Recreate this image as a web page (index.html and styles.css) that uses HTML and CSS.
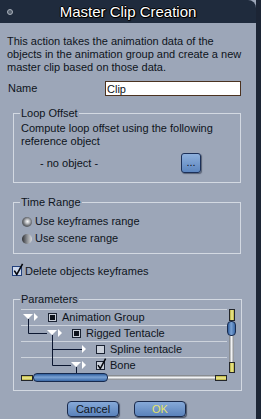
FILE: index.html
```html
<!DOCTYPE html>
<html lang="en">
<head>
<meta charset="UTF-8">
<meta name="viewport" content="width=device-width, initial-scale=1.0">
<title>Master Clip Creation</title>
<link rel="stylesheet" href="styles.css">
</head>
<body>
<div class="dialog">
    <div class="titlebar">
        <span class="close-dot"></span>
        <h1>Master Clip Creation</h1>
    </div>
    <div class="content">
        <p class="intro">This action takes the animation data of the<br>objects in the animation group and create a new<br>master clip based on those data.</p>

        <div class="name-row">
            <label for="clipName">Name</label>
            <input type="text" id="clipName" class="text-field" value="Clip">
        </div>

        <fieldset class="group group-loop">
            <legend>Loop Offset</legend>
            <p class="group-text">Compute loop offset using the following<br>reference object</p>
            <div class="object-row">
                <span class="object-name">- no object -</span>
                <button class="small-button">...</button>
            </div>
        </fieldset>

        <fieldset class="group group-time">
            <legend>Time Range</legend>
            <div class="radio-row"><span class="radio checked"></span>Use keyframes range</div>
            <div class="radio-row"><span class="radio"></span>Use scene range</div>
        </fieldset>

        <div class="check-row">
            <svg class="tick-box" width="12" height="14" viewBox="0 0 12 14">
                <rect x="0.5" y="3.5" width="9" height="9" fill="#cdd8ec" stroke="#22407c"/>
                <path d="M2.3 7.6 L4.8 11.4 L10.6 0.8" fill="none" stroke="#05070c" stroke-width="1.6"/>
            </svg>
            Delete objects keyframes
        </div>

        <fieldset class="group group-params">
            <legend>Parameters</legend>
            <div class="tree">
                <div class="tree-body">
                    <svg class="links" width="206" height="64">
                        <path d="M7.5 10 V24.5 H26 M31.5 26 V56.5 H50 M31.5 40.5 H61 M55.5 58 V64" fill="none" stroke="#0b1630" stroke-width="1"/>
                    </svg>
                    <div class="node depth-0">
                        <svg class="twist" width="16" height="9"><polygon points="0,1 10,1 5,6" fill="#fff"/><polygon points="11,0 15,4 11,8" fill="#fff"/></svg>
                        <span class="node-check mixed"></span>Animation Group
                    </div>
                    <div class="node depth-1">
                        <svg class="twist" width="16" height="9"><polygon points="0,1 10,1 5,6" fill="#fff"/><polygon points="11,0 15,4 11,8" fill="#fff"/></svg>
                        <span class="node-check mixed"></span>Rigged Tentacle
                    </div>
                    <div class="node depth-2">
                        <svg class="twist" width="16" height="9"><polygon points="11,0 15,4 11,8" fill="#fff"/></svg>
                        <span class="node-check"></span>Spline tentacle
                    </div>
                    <div class="node depth-2">
                        <svg class="twist" width="16" height="9"><polygon points="0,1 10,1 5,6" fill="#fff"/><polygon points="11,0 15,4 11,8" fill="#fff"/></svg>
                        <svg class="node-tick" width="11" height="13" viewBox="0 0 11 13">
                            <rect x="0.5" y="3.5" width="8" height="8" fill="#c9cfd9" stroke="#1a2232"/>
                            <path d="M2 7.2 L4.3 10.6 L9.6 0.6" fill="none" stroke="#05070c" stroke-width="1.5"/>
                        </svg>Bone
                    </div>
                </div>
                <div class="vscroll">
                    <span class="cap"></span>
                    <span class="thumb"></span>
                    <span class="track"></span>
                    <span class="cap cap-end"></span>
                </div>
                <div class="hscroll">
                    <span class="cap"></span>
                    <span class="thumb"></span>
                    <span class="track"></span>
                    <span class="cap"></span>
                </div>
            </div>
        </fieldset>

        <div class="button-row">
            <button class="button">Cancel</button>
            <button class="button button-ok">OK</button>
        </div>
    </div>
</div>
</body>
</html>
```

FILE: styles.css
```css
body {
    margin: 0;
    background-color: #1c2535;
    font-family: 'Liberation Sans', Arial, sans-serif;
    font-size: 11px;
    color: #0e1420;
}
.dialog {
    width: 256px;
    height: 419px;
    background-color: #9ca6b8;
    overflow: hidden;
}
.titlebar {
    height: 23px;
    background-color: #1f2b3d;
    border-top-right-radius: 8px;
    display: grid;
    grid-template-columns: 20px 1fr 20px;
    align-items: center;
}
.close-dot {
    width: 4px;
    height: 4px;
    margin-left: 7px;
    border: 1px solid #a9b1bc;
    border-radius: 50%;
    background-color: #55606e;
}
.titlebar h1 {
    margin: 0;
    font-size: 15px;
    font-weight: normal;
    color: #fff;
    text-align: center;
    line-height: 23px;
    text-shadow: 1px 0 0 #000, -1px 0 0 #000, 0 1px 0 #000, 0 -1px 0 #000, 1px 1px 1px #000;
}
.content {
    padding: 0 0 0 7px;
    line-height: 13px;
}
.intro {
    margin: 12px 0 0 0;
    white-space: nowrap;
}
.name-row {
    margin-top: 7px;
    display: grid;
    grid-template-columns: 98px 136px;
    align-items: center;
    height: 15px;
}
.name-row label {
    padding-left: 1px;
}
.text-field {
    box-sizing: border-box;
    width: 136px;
    height: 15px;
    margin: 0;
    padding: 0 1px;
    border: 1px solid #4b3220;
    background-color: #fff;
    font-family: inherit;
    font-size: 11px;
    color: #0e1420;
    outline: none;
}
.group {
    box-sizing: border-box;
    width: 228px;
    margin: 11px 0 0 6px;
    border: 1px solid #d3d9e2;
    padding: 2px 5px 9px 7px;
}
.group legend {
    padding: 0 1px;
    margin-left: -1px;
    line-height: 13px;
}
.group-text {
    margin: 0;
}
.object-row {
    margin-top: 5px;
    height: 20px;
    display: flex;
    align-items: center;
}
.object-name {
    margin-left: 19px;
}
.small-button {
    width: 20px;
    height: 20px;
    margin: 0 34px 0 auto;
    padding: 0 0 3px 0;
    border: 1px solid #1c3058;
    border-radius: 3px;
    background: linear-gradient(#8eb0dc, #5d86bf);
    box-shadow: 1px 1px 1px rgba(20, 30, 50, 0.5);
    font-family: inherit;
    font-size: 11px;
    color: #0e1420;
}
.group-time {
    margin-top: 13px;
    padding-top: 4px;
    padding-bottom: 6px;
}
.radio-row {
    height: 17px;
    display: flex;
    align-items: center;
}
.radio {
    width: 10px;
    height: 10px;
    margin: 0 3px 0 1px;
    border-radius: 50%;
    background: linear-gradient(to right, #2e3034, #8a8d92 50%, #d8dadd);
}
.radio.checked {
    background: radial-gradient(circle at 55% 45%, #fafafa 0, #c9cbcf 22%, #6a6d72 55%, #2a2c30 100%);
}
.check-row {
    margin-top: 11px;
    height: 13px;
    display: flex;
    align-items: center;
}
.tick-box {
    margin: -3px 1px 0 5px;
}
.group-params {
    margin-top: 15px;
    padding-top: 3px;
    padding-bottom: 8px;
}
.tree {
    display: grid;
    grid-template-columns: 206px 9px;
    grid-template-rows: 64px 9px;
}
.tree-body {
    position: relative;
}
.links {
    position: absolute;
    left: 0;
    top: 0;
    pointer-events: none;
}
.node {
    box-sizing: border-box;
    height: 16px;
    border-top: 1px solid #cdd3dc;
    display: flex;
    align-items: center;
    white-space: nowrap;
}
.depth-0 { padding-left: 2px; }
.depth-1 { padding-left: 26px; }
.depth-2 { padding-left: 50px; }
.twist {
    flex: none;
}
.node-check {
    flex: none;
    box-sizing: border-box;
    width: 9px;
    height: 9px;
    margin: 0 5px 0 9px;
    border: 1px solid #1a2232;
    background-color: #c9cfd9;
    display: flex;
    align-items: center;
    justify-content: center;
}
.node-check.mixed::after {
    content: "";
    width: 5px;
    height: 5px;
    background-color: #0e131c;
}
.node-tick {
    flex: none;
    margin: -3px 3px 0 9px;
}
.vscroll {
    display: flex;
    flex-direction: column;
    align-items: center;
}
.vscroll .cap {
    box-sizing: border-box;
    width: 6px;
    height: 12px;
    border: 1px solid #23262a;
    background: linear-gradient(to right, #b6ae3c, #f2ee98, #b6ae3c);
}
.vscroll .cap-end {
    height: 11px;
}
.vscroll .thumb {
    box-sizing: border-box;
    width: 9px;
    height: 15px;
    border: 1px solid #172a4e;
    border-radius: 4px;
    background: linear-gradient(to right, #2f5d9c, #7aa2d4 45%, #3a68a6);
}
.vscroll .track {
    flex: 1;
    width: 5px;
    background: linear-gradient(to right, #6f7378, #f2f3f4 50%, #80848a);
}
.hscroll {
    display: flex;
    align-items: center;
}
.hscroll .cap {
    box-sizing: border-box;
    width: 12px;
    height: 6px;
    border: 1px solid #23262a;
    background: linear-gradient(#b6ae3c, #f2ee98, #b6ae3c);
}
.hscroll .thumb {
    box-sizing: border-box;
    width: 75px;
    height: 9px;
    border: 1px solid #172a4e;
    border-radius: 4px;
    background: linear-gradient(#2f5d9c, #7aa2d4 45%, #3a68a6);
}
.hscroll .track {
    flex: 1;
    height: 5px;
    background: linear-gradient(#6f7378, #f2f3f4 50%, #80848a);
}
.button-row {
    margin-top: 10px;
    padding-left: 60px;
    display: flex;
    gap: 15px;
}
.button {
    width: 52px;
    height: 16px;
    padding: 0;
    border: 1px solid #1a2a4c;
    border-radius: 4px;
    background: linear-gradient(#86a9d8, #5a82bb);
    box-shadow: 1px 1px 1px rgba(20, 30, 50, 0.6);
    font-family: inherit;
    font-size: 11px;
    line-height: 14px;
    color: #0e1420;
}
.button-ok {
    color: #e6e36a;
}
```
